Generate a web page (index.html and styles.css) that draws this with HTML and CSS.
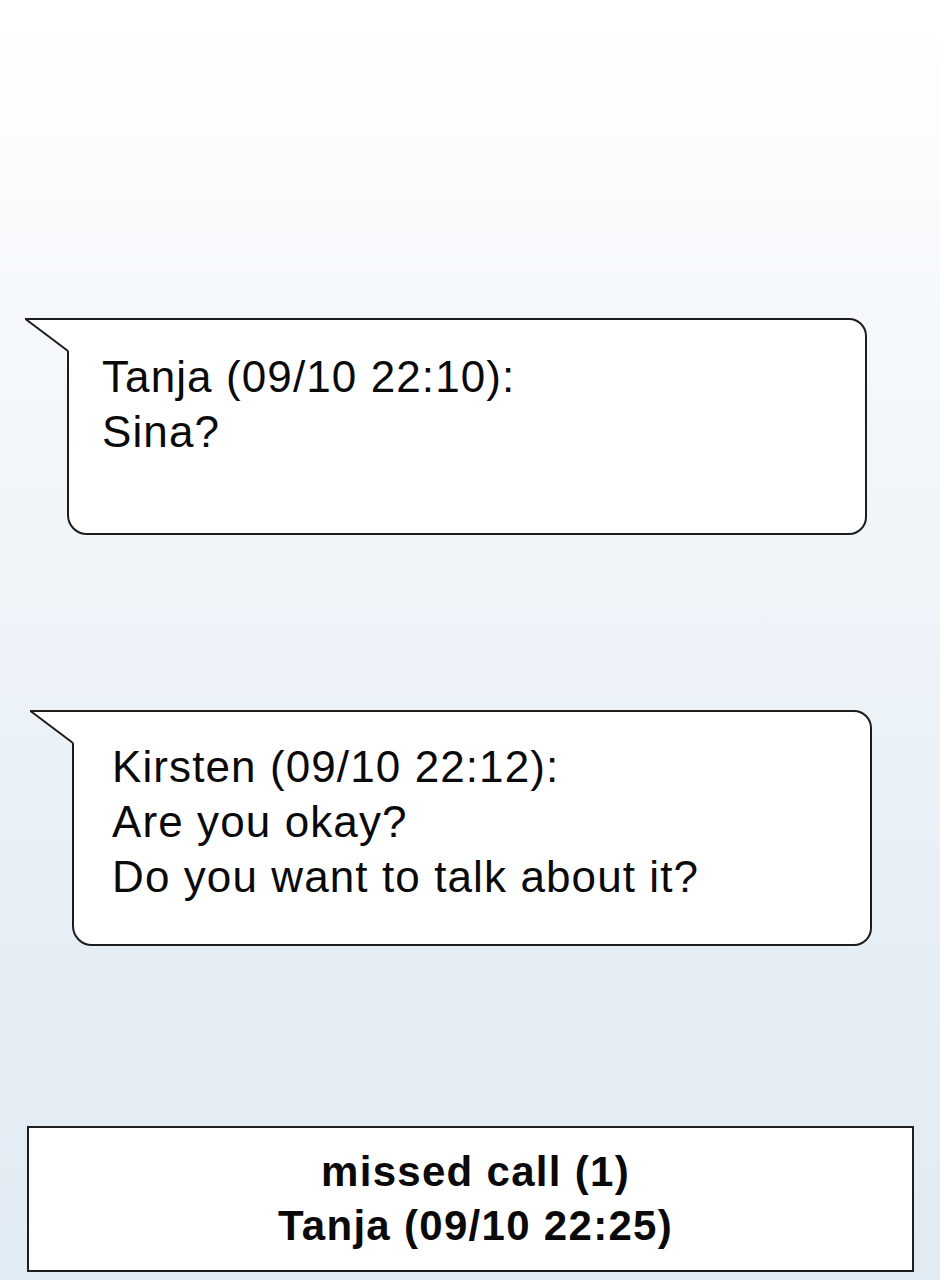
FILE: index.html
```html
<!DOCTYPE html>
<html lang="en">
<head>
<meta charset="utf-8">
<title>Messages</title>
<link rel="stylesheet" href="styles.css">
</head>
<body>
<main class="panel">
  <div class="bubble bubble-first">
    <svg class="tail" width="47" height="34" viewBox="0 0 47 34" aria-hidden="true">
      <polygon points="1,1 47,1 47,33 44,33" fill="#ffffff"/>
      <line x1="1" y1="1" x2="47" y2="1" stroke="#1c1c1c" stroke-width="2"/>
      <line x1="1.5" y1="1" x2="44" y2="33" stroke="#1c1c1c" stroke-width="2"/>
    </svg>
    <p class="line">Tanja (09/10 22:10):</p>
    <p class="line">Sina?</p>
  </div>

  <div class="bubble bubble-second">
    <svg class="tail" width="47" height="34" viewBox="0 0 47 34" aria-hidden="true">
      <polygon points="1,1 47,1 47,33 44,33" fill="#ffffff"/>
      <line x1="1" y1="1" x2="47" y2="1" stroke="#1c1c1c" stroke-width="2"/>
      <line x1="1.5" y1="1" x2="44" y2="33" stroke="#1c1c1c" stroke-width="2"/>
    </svg>
    <p class="line">Kirsten (09/10 22:12):</p>
    <p class="line">Are you okay?</p>
    <p class="line">Do you want to talk about it?</p>
  </div>

  <div class="notice">
    <p class="notice-line">missed call (1)</p>
    <p class="notice-line">Tanja (09/10 22:25)</p>
  </div>
</main>
</body>
</html>
```

FILE: styles.css
```css
html, body {
  margin: 0;
  padding: 0;
}

body {
  width: 940px;
  height: 1280px;
  overflow: hidden;
  background: linear-gradient(180deg, #ffffff 0%, #f6f9fb 22%, #edf3f8 50%, #e6eef5 75%, #e1ebf3 100%);
  font-family: "Liberation Sans", Arial, sans-serif;
  color: #0a0a0a;
}

.panel {
  display: flex;
  flex-direction: column;
  align-items: flex-start;
  padding-top: 318px;
}

.bubble {
  position: relative;
  box-sizing: border-box;
  width: 800px;
  background: #ffffff;
  border: 2px solid #1c1c1c;
  border-radius: 0 18px 18px 20px;
}

.bubble-first {
  margin-left: 67px;
  height: 217px;
  padding: 29px 20px 0 33px;
}

.bubble-second {
  margin-left: 72px;
  margin-top: 175px;
  height: 236px;
  padding: 27px 20px 0 38px;
}

.tail {
  position: absolute;
  top: -2px;
  left: -45px;
  display: block;
}

.line {
  margin: 0;
  font-size: 44px;
  line-height: 55px;
  letter-spacing: 1.1px;
  white-space: nowrap;
}

.notice {
  box-sizing: border-box;
  margin-left: 27px;
  margin-top: 180px;
  width: 887px;
  height: 146px;
  background: #ffffff;
  border: 2px solid #1f1f1f;
  padding: 17px 0 0 10px;
  text-align: center;
}

.notice-line {
  margin: 0;
  font-size: 42px;
  font-weight: bold;
  line-height: 54px;
  letter-spacing: 1.3px;
  white-space: nowrap;
}
```
